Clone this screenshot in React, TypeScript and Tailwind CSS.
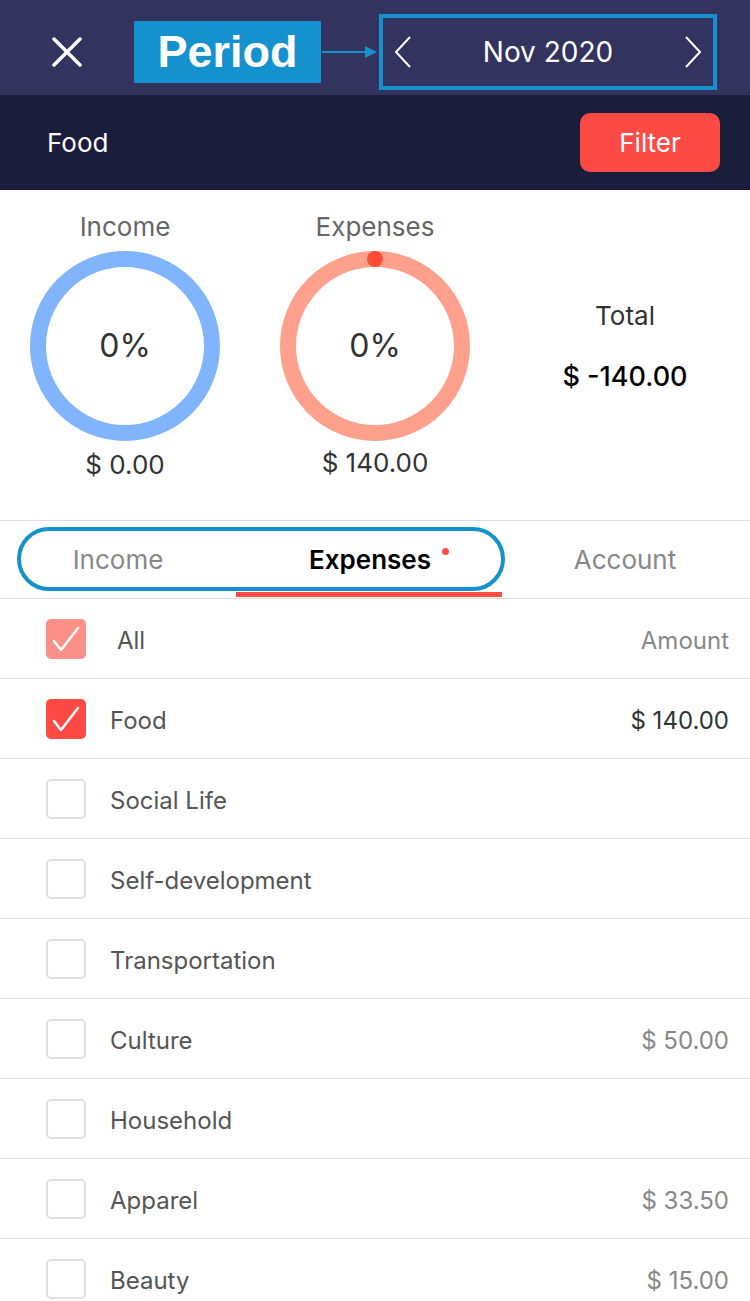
import React from 'react';

type Row = { name: string; amount?: string; dark?: boolean; state: 'all' | 'on' | 'off' };

const rows: Row[] = [
  { name: 'All', amount: 'Amount', state: 'all' },
  { name: 'Food', amount: '$ 140.00', dark: true, state: 'on' },
  { name: 'Social Life', state: 'off' },
  { name: 'Self-development', state: 'off' },
  { name: 'Transportation', state: 'off' },
  { name: 'Culture', amount: '$ 50.00', state: 'off' },
  { name: 'Household', state: 'off' },
  { name: 'Apparel', amount: '$ 33.50', state: 'off' },
  { name: 'Beauty', amount: '$ 15.00', state: 'off' },
];

function Ring({ color, dot }: { color: string; dot?: boolean }) {
  return (
    <svg width="190" height="190" viewBox="0 0 190 190">
      <circle cx="95" cy="95" r="87" fill="none" stroke={color} strokeWidth="16" />
      {dot && <circle cx="95" cy="8" r="8" fill="#ff4b33" />}
      <text x="95" y="106" textAnchor="middle" fill="#333" fontSize="32" fontFamily="Inter, sans-serif">
        0%
      </text>
    </svg>
  );
}

function Check({ state }: { state: Row['state'] }) {
  if (state === 'off') {
    return <div className="w-10 h-10 rounded-[5px] border-2 border-[#e0e0e0] shrink-0" />;
  }
  return (
    <div className={`w-10 h-10 rounded-[5px] shrink-0 ${state === 'all' ? 'bg-[#fc8f88]' : 'bg-[#fd4a45]'}`}>
      <svg width="40" height="40" viewBox="0 0 40 40">
        <polyline points="8,22 15,31 32,9" fill="none" stroke="white" strokeWidth="2.5" strokeLinecap="round" strokeLinejoin="round" />
      </svg>
    </div>
  );
}

export default function App() {
  return (
    <div className="w-[750px] h-[1301px] overflow-hidden bg-white font-['Inter',sans-serif]">
      {/* Top bar */}
      <div className="h-[95px] pt-[8px] bg-[#32335f] flex items-center">
        <svg className="ml-[52px]" width="30" height="30" viewBox="0 0 30 30">
          <path d="M2 2 L28 28 M28 2 L2 28" stroke="white" strokeWidth="3.5" strokeLinecap="round" />
        </svg>
        <div className="ml-[52px] w-[187px] h-[62px] bg-[#1591cd] flex items-center justify-center text-white font-bold text-[45px] font-['Liberation_Sans',Arial,sans-serif] leading-none">
          Period
        </div>
        <svg width="58" height="14" viewBox="0 0 58 14">
          <line x1="1" y1="7" x2="46" y2="7" stroke="#1591cd" strokeWidth="2" />
          <polygon points="44,1 56,7 44,13" fill="#1591cd" />
        </svg>
        <div className="w-[338px] h-[76px] border-[4px] border-[#1591cd] flex items-center justify-between px-[11px]">
          <svg width="18" height="32" viewBox="0 0 18 32">
            <polyline points="16,1 2,16 16,31" fill="none" stroke="white" strokeWidth="2" />
          </svg>
          <span className="text-white text-[28px]">Nov 2020</span>
          <svg width="18" height="32" viewBox="0 0 18 32">
            <polyline points="2,1 16,16 2,31" fill="none" stroke="white" strokeWidth="2" />
          </svg>
        </div>
      </div>

      {/* Sub bar */}
      <div className="h-[95px] bg-[#1b1d3c] flex items-center justify-between pl-[47px] pr-[30px]">
        <span className="text-white text-[26px]">Food</span>
        <div className="w-[140px] h-[59px] rounded-[10px] bg-[#fd4a45] flex items-center justify-center text-white text-[26px]">
          Filter
        </div>
      </div>

      {/* Stats */}
      <div className="h-[330px] grid grid-cols-3">
        <div className="flex flex-col items-center pt-[21px]">
          <div className="text-[26px] leading-[32px] text-[#666]">Income</div>
          <div className="mt-[8px]"><Ring color="#80b4fc" /></div>
          <div className="mt-[8px] text-[26px] leading-[32px] text-[#333]">$ 0.00</div>
        </div>
        <div className="flex flex-col items-center pt-[21px]">
          <div className="text-[26px] leading-[32px] text-[#666]">Expenses</div>
          <div className="mt-[8px]"><Ring color="#ffa08c" dot /></div>
          <div className="mt-[6px] text-[26px] leading-[32px] text-[#333]">$ 140.00</div>
        </div>
        <div className="flex flex-col items-center pt-[110px]">
          <div className="text-[26px] leading-[32px] text-[#333]">Total</div>
          <div className="mt-[29px] text-[27px] leading-[32px] text-black font-medium">$ -140.00</div>
        </div>
      </div>

      {/* Tabs */}
      <div className="relative h-[79px] border-t border-b border-[#dddddd] grid grid-cols-3 items-center">
        <div className="text-center text-[26px] text-[#888] pr-[14px]">Income</div>
        <div className="text-center text-[26px] text-black font-semibold pl-[8px]">
          Expenses
          <span className="relative -top-[14px] ml-[11px] inline-block w-[7px] h-[7px] rounded-full bg-[#fd4a45]" />
        </div>
        <div className="text-center text-[26px] text-[#888]">Account</div>
        <div className="absolute left-[17px] top-[6px] w-[488px] h-[64px] rounded-[32px] border-[4px] border-[#1591cd]" />
        <div className="absolute left-[236px] top-[71px] w-[266px] h-[5px] bg-[#fd4a45]" />
      </div>

      {/* Rows */}
      {rows.map((r) => (
        <div key={r.name} className="h-[80px] border-b border-[#dddddd] flex items-center pl-[46px] pr-[21px]">
          <Check state={r.state} />
          <span className={`${r.state === 'all' ? 'ml-[31px]' : 'ml-[24px]'} mt-[4px] text-[24px] text-[#555] flex-1`}>{r.name}</span>
          {r.amount && (
            <span className={`mt-[4px] text-[24px] ${r.dark ? 'text-[#333]' : 'text-[#888]'}`}>{r.amount}</span>
          )}
        </div>
      ))}
    </div>
  );
}
